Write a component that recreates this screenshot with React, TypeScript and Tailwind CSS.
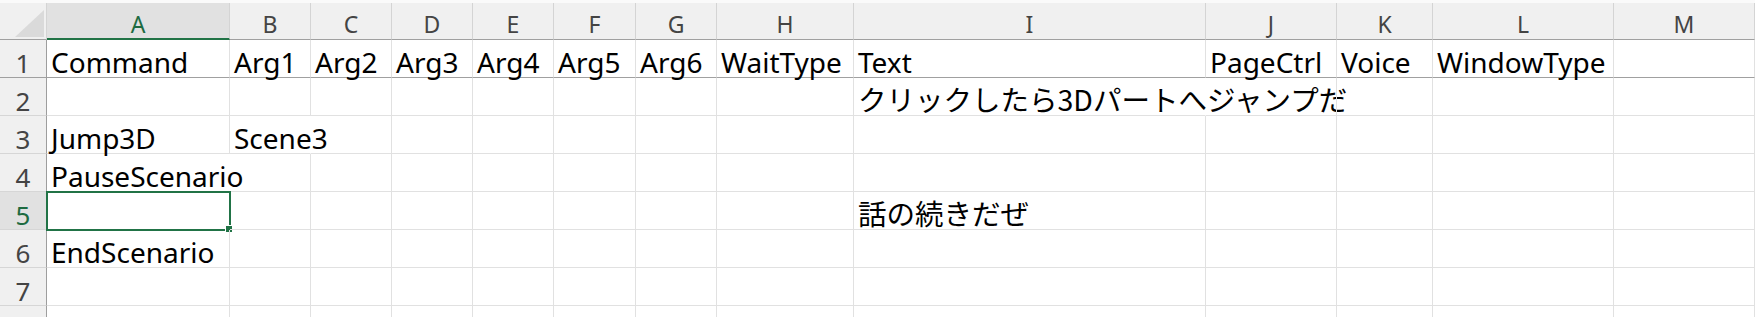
import React from "react"

const GRID =
  "grid grid-cols-[47px_183px_81px_81px_81px_81px_82px_81px_137px_352px_131px_96px_181px_1fr]"

const LETTERS = ["A", "B", "C", "D", "E", "F", "G", "H", "I", "J", "K", "L", "M"]

type Cell = { t?: string; jp?: boolean; spill?: boolean }

const ROWS: Cell[][] = [
  [
    { t: "Command" },
    { t: "Arg1" },
    { t: "Arg2" },
    { t: "Arg3" },
    { t: "Arg4" },
    { t: "Arg5" },
    { t: "Arg6" },
    { t: "WaitType" },
    { t: "Text" },
    { t: "PageCtrl" },
    { t: "Voice" },
    { t: "WindowType" },
    {},
  ],
  [{}, {}, {}, {}, {}, {}, {}, {}, { t: "クリックしたら3Dパートへジャンプだ", jp: true, spill: true }, {}, {}, {}, {}],
  [{ t: "Jump3D" }, { t: "Scene3", spill: true }, {}, {}, {}, {}, {}, {}, {}, {}, {}, {}, {}],
  [{ t: "PauseScenario", spill: true }, {}, {}, {}, {}, {}, {}, {}, {}, {}, {}, {}, {}],
  [{}, {}, {}, {}, {}, {}, {}, {}, { t: "話の続きだぜ", jp: true }, {}, {}, {}, {}],
  [{ t: "EndScenario" }, {}, {}, {}, {}, {}, {}, {}, {}, {}, {}, {}, {}],
  [{}, {}, {}, {}, {}, {}, {}, {}, {}, {}, {}, {}, {}],
]

export default function App() {
  return (
    <div className="w-[1755px] h-[317px] overflow-hidden bg-white font-['Noto_Sans','Noto_Sans_CJK_JP',sans-serif]">
      <div className="h-[3px] bg-[#fafafa]" />

      {/* column headers */}
      <div className={GRID}>
        <div className="relative h-[37px] bg-[#f0f0f0] border-r border-b border-r-[#d4d4d4] border-b-[#a0a0a0]">
          <svg className="absolute left-0 top-0" width="47" height="37" viewBox="0 0 47 37">
            <polygon points="44,7 44,34 15,34" fill="#dadada" />
          </svg>
        </div>
        {LETTERS.map((l) =>
          l === "A" ? (
            <div
              key={l}
              className="h-[37px] flex items-end justify-center pb-[2px] bg-[#e1e1e1] border-r border-b-2 border-r-[#d4d4d4] border-b-[#217346] text-[23px] leading-[23px] text-[#1e6b41]"
            >
              {l}
            </div>
          ) : (
            <div
              key={l}
              className="h-[37px] flex items-end justify-center pb-[3px] bg-[#f0f0f0] border-r border-b border-r-[#d4d4d4] border-b-[#a0a0a0] text-[23px] leading-[23px] text-[#444444]"
            >
              {l}
            </div>
          )
        )}
      </div>

      {/* rows */}
      {ROWS.map((row, r) => (
        <div key={r} className={GRID}>
          <div
            className={
              r === 4
                ? "h-[38px] flex items-end justify-center bg-[#e1e1e1] border-r border-b border-r-[#9e9e9e] border-b-[#d6d6d6] text-[26px] leading-[28px] text-[#1e6b41]"
                : r === 0
                ? "h-[38px] flex items-end justify-center bg-[#f0f0f0] border-r border-b border-r-[#9e9e9e] border-b-[#a0a0a0] text-[26px] leading-[28px] text-[#444444]"
                : "h-[38px] flex items-end justify-center bg-[#f0f0f0] border-r border-b border-r-[#9e9e9e] border-b-[#d6d6d6] text-[26px] leading-[28px] text-[#444444]"
            }
          >
            {r + 1}
          </div>
          {row.map((c, i) => (
            <div
              key={i}
              className={
                (r === 0 ? "border-b-[#a0a0a0] " : "border-b-[#e1e1e1] ") +
                (c.spill ? "border-r-transparent " : "border-r-[#e1e1e1] ") +
                "relative min-w-0 h-[38px] flex items-end pl-[4px] pb-[1px] border-r border-b whitespace-nowrap overflow-visible text-black"
              }
            >
              {c.t && (
                <span
                  className={
                    c.jp
                      ? "font-['Noto_Sans_CJK_JP',sans-serif] text-[28.5px] leading-[28px] pb-[1px]"
                      : "text-[28px] leading-[28px]"
                  }
                >
                  {c.t}
                </span>
              )}
              {r === 4 && i === 0 && (
                <div className="absolute -left-[1px] -top-[1px] w-[185px] h-[40px] border-2 border-[#217346]">
                  <div className="absolute -right-[4px] -bottom-[4px] w-[8px] h-[8px] bg-[#217346] border border-white" />
                </div>
              )}
            </div>
          ))}
        </div>
      ))}

      {/* partial row 8 */}
      <div className={GRID}>
        <div className="h-[38px] bg-[#f0f0f0] border-r border-r-[#9e9e9e]" />
        {LETTERS.map((l) => (
          <div key={l} className="h-[38px] border-r border-r-[#e1e1e1]" />
        ))}
      </div>
    </div>
  )
}
